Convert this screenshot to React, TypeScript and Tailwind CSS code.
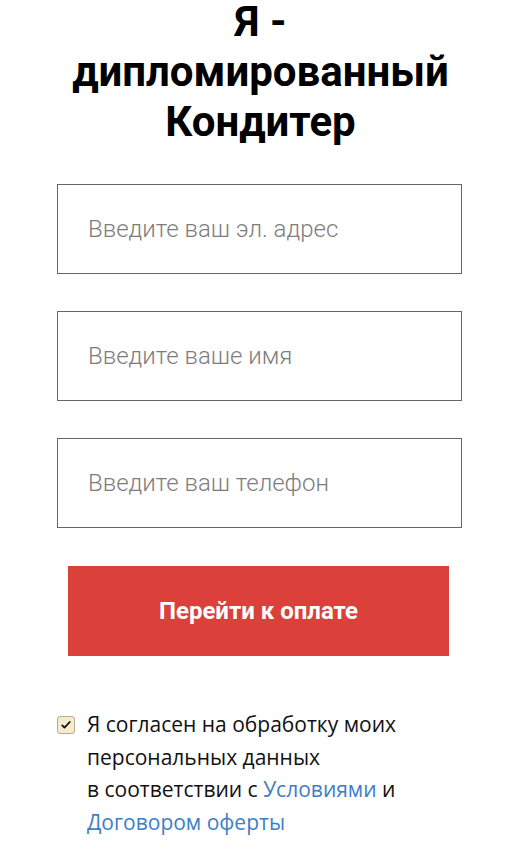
import { useState } from "react";

function Field({ placeholder }: { placeholder: string }) {
  return (
    <input
      type="text"
      placeholder={placeholder}
      className="block w-[405px] h-[90px] border border-[#666666] bg-white px-[30px] text-[24px] font-light text-[#333] placeholder-[#7d7d7d] outline-none"
      style={{ fontFamily: "Roboto, sans-serif" }}
    />
  );
}

export default function App() {
  const [agree, setAgree] = useState(true);

  return (
    <div className="min-h-screen bg-white" style={{ fontFamily: "Roboto, sans-serif" }}>
      {/* Title */}
      <h1 className="-mt-[3px] text-center text-[42px] leading-[50px] font-bold text-black px-6">
        Я -<br />
        дипломированный
        <br />
        Кондитер
      </h1>

      {/* Form */}
      <div className="pl-[57px] pt-[37px] flex flex-col gap-[37px]">
        <Field placeholder="Введите ваш эл. адрес" />
        <Field placeholder="Введите ваше имя" />
        <Field placeholder="Введите ваш телефон" />
      </div>

      <button className="ml-[68px] mt-[38px] w-[381px] h-[90px] bg-[#db403a] text-white text-[24px] font-bold">
        Перейти к оплате
      </button>

      {/* Agreement */}
      <label
        className="flex items-start gap-[12px] pl-[57px] pr-4 mt-[52px] text-[21px] leading-[32.5px] text-[#111]"
        style={{ fontFamily: "'Open Sans', sans-serif" }}
      >
        <span
          onClick={() => setAgree(!agree)}
          className="mt-[8px] w-[18px] h-[18px] shrink-0 rounded-[3px] border border-[#b9ad8f] bg-[#f6ebcd] flex items-center justify-center"
        >
          {agree && (
            <svg viewBox="0 0 16 16" className="w-[12px] h-[12px]">
              <path d="M3 8.5l3 3 7-7.5" fill="none" stroke="#111" strokeWidth="2.4" strokeLinecap="round" strokeLinejoin="round" />
            </svg>
          )}
        </span>
        <span>
          Я согласен на обработку моих
          <br />
          персональных данных
          <br />в соответствии с <a className="text-[#3d7ec6]">Условиями</a> и
          <br />
          <a className="text-[#3d7ec6]">Договором оферты</a>
        </span>
      </label>
    </div>
  );
}
